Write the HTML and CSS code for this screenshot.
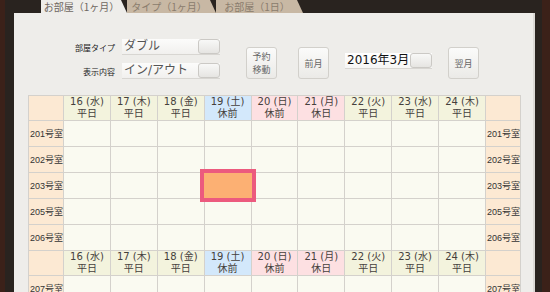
FILE: index.html
```html
<!DOCTYPE html>
<html lang="ja">
<head>
    <meta charset="UTF-8" />
    <meta name="viewport" content="width=device-width,initial-scale=1.0" />
    <title>客室カレンダー</title>
    <link rel="stylesheet" href="styles.css">
</head>
<body>

    <div class="page">
        <div class="tabs">
            <div class="tab tab-room active">お部屋（1ヶ月）</div>
            <div class="tab tab-type">タイプ（1ヶ月）</div>
            <div class="tab tab-day">お部屋（1日）</div>
        </div>

        <div class="panel">
            <div class="controls">
                <div class="filters">
                    <label>部屋タイプ</label>
                    <div class="select"><span>ダブル</span><i></i></div>
                    <label>表示内容</label>
                    <div class="select"><span>イン/アウト</span><i></i></div>
                </div>
                <button class="btn move">予約<br>移動</button>
                <button class="btn prev">前月</button>
                <div class="select month"><span>2016年3月</span><i></i></div>
                <button class="btn next">翌月</button>
            </div>

            <table class="calendar">
                <colgroup>
                    <col class="col-room">
                    <col span="9">
                    <col class="col-room">
                </colgroup>
                <tr class="head">
                    <th class="corner"></th>
                    <th>16 (水)<br>平日</th>
                    <th>17 (木)<br>平日</th>
                    <th>18 (金)<br>平日</th>
                    <th class="sat">19 (土)<br>休前</th>
                    <th class="hol">20 (日)<br>休前</th>
                    <th class="hol">21 (月)<br>休日</th>
                    <th>22 (火)<br>平日</th>
                    <th>23 (水)<br>平日</th>
                    <th>24 (木)<br>平日</th>
                    <th class="corner"></th>
                </tr>
                <tr>
                    <td class="room">201号室</td>
                    <td></td><td></td><td></td><td></td><td></td><td></td><td></td><td></td><td></td>
                    <td class="room">201号室</td>
                </tr>
                <tr>
                    <td class="room">202号室</td>
                    <td></td><td></td><td></td><td></td><td></td><td></td><td></td><td></td><td></td>
                    <td class="room">202号室</td>
                </tr>
                <tr>
                    <td class="room">203号室</td>
                    <td></td><td></td><td></td>
                    <td class="picked"><span class="pick"></span></td>
                    <td></td><td></td><td></td><td></td><td></td>
                    <td class="room">203号室</td>
                </tr>
                <tr>
                    <td class="room">205号室</td>
                    <td></td><td></td><td></td><td></td><td></td><td></td><td></td><td></td><td></td>
                    <td class="room">205号室</td>
                </tr>
                <tr>
                    <td class="room">206号室</td>
                    <td></td><td></td><td></td><td></td><td></td><td></td><td></td><td></td><td></td>
                    <td class="room">206号室</td>
                </tr>
                <tr class="head">
                    <th class="corner"></th>
                    <th>16 (水)<br>平日</th>
                    <th>17 (木)<br>平日</th>
                    <th>18 (金)<br>平日</th>
                    <th class="sat">19 (土)<br>休前</th>
                    <th class="hol">20 (日)<br>休前</th>
                    <th class="hol">21 (月)<br>休日</th>
                    <th>22 (火)<br>平日</th>
                    <th>23 (水)<br>平日</th>
                    <th>24 (木)<br>平日</th>
                    <th class="corner"></th>
                </tr>
                <tr>
                    <td class="room">207号室</td>
                    <td></td><td></td><td></td><td></td><td></td><td></td><td></td><td></td><td></td>
                    <td class="room">207号室</td>
                </tr>
            </table>
        </div>
    </div>

</body>
</html>
```

FILE: styles.css
```css
html, body {
    height: 100%;
    overflow: hidden;
}

body {
    margin: 0;
    font-family: "DejaVu Sans", "Noto Sans CJK JP", sans-serif;
    background: linear-gradient(to right, #3b2119 0, #3b2119 5px, #29231f 5px, #29231f 542px, #3b2119 542px);
}

.page {
    width: 521px;
    margin-left: 14px;
    height: 100%;
    display: flex;
    flex-direction: column;
}

/* tabs */
.tabs {
    display: flex;
    height: 13px;
    padding-left: 27px;
}

.tab {
    flex: none;
    height: 13px;
    line-height: 13px;
    font-size: 10px;
    font-family: "Noto Sans CJK JP", sans-serif;
    text-align: center;
    padding-right: 5px;
    box-sizing: border-box;
    color: #8a7c6d;
    background: #c8b8a4;
    clip-path: polygon(0 0, calc(100% - 6px) 0, 100% 100%, 0 100%);
}

.tab.active {
    background: #eeedea;
    color: #6e6761;
}

.tab-room { width: 86px; }
.tab-type { width: 89px; }
.tab-day { width: 87px; }

/* panel */
.panel {
    flex: 1;
    background: #eeedea;
    border-right: 2px solid #dcdad6;
    padding: 26px 14px 0;
    box-sizing: border-box;
}

.controls {
    display: flex;
    align-items: flex-end;
}

.filters {
    display: grid;
    grid-template-columns: 40px 98px;
    column-gap: 7px;
    row-gap: 8px;
    align-items: center;
    margin-left: 47px;
}

.filters label {
    font-size: 8px;
    color: #222;
    text-align: right;
    white-space: nowrap;
    font-family: "Noto Sans CJK JP", sans-serif;
}

.select {
    display: flex;
    height: 15px;
    background: linear-gradient(#fcfcfb, #f1f0ee);
    border-bottom: 1px solid #d8d6d2;
}

.select span {
    flex: 1;
    font-size: 12px;
    line-height: 15px;
    padding-left: 2px;
    color: #555;
    white-space: nowrap;
}

.select i {
    width: 22px;
    border: 1px solid #cbc9c5;
    border-radius: 3px;
    background: linear-gradient(#f8f8f7, #e6e5e2);
    box-sizing: border-box;
}

.select.month {
    width: 87px;
    margin: 0 0 10px 16px;
    background: linear-gradient(#fff, #f6f6f5);
}

.select.month span {
    color: #111;
    padding-left: 2px;
}

.btn {
    width: 31px;
    height: 32px;
    padding: 0;
    font-family: "Noto Sans CJK JP", sans-serif;
    font-size: 9px;
    line-height: 13px;
    color: #666;
    border: 1px solid #d2d0cb;
    border-radius: 3px;
    background: linear-gradient(#fbfbfa, #ebeae7);
}

.btn.move { margin-left: 26px; }
.btn.prev { margin-left: 21px; }
.btn.next { margin-left: 16px; }

/* calendar */
.calendar {
    margin-top: 16px;
    width: 493px;
    table-layout: fixed;
    border-collapse: collapse;
    border: 1px solid #cdcac6;
}

.col-room {
    width: 35px;
}

.calendar th,
.calendar td {
    border: 1px solid #d4d1cc;
    padding: 0;
}

.calendar td {
    height: 25px;
    background: #fafaf1;
}

.calendar th {
    height: 24px;
    font-size: 10px;
    line-height: 12px;
    font-weight: normal;
    color: #45403c;
    background: #f3f3dd;
}

.calendar th.sat {
    background: #d3e8fb;
}

.calendar th.hol {
    background: #fde0e2;
}

.calendar th.corner,
.calendar td.room {
    background: #fce9d3;
}

.calendar td.room {
    font-family: "Liberation Sans", "Noto Sans CJK JP", sans-serif;
    font-size: 9px;
    color: #333;
    white-space: nowrap;
    padding-left: 1px;
}

.calendar td.picked {
    position: relative;
    background: #fcb073;
}

.pick {
    position: absolute;
    top: -4px;
    bottom: -4px;
    left: -5px;
    right: -5px;
    border: 4px solid #ec5a7e;
    background: #fcb073;
}
```
